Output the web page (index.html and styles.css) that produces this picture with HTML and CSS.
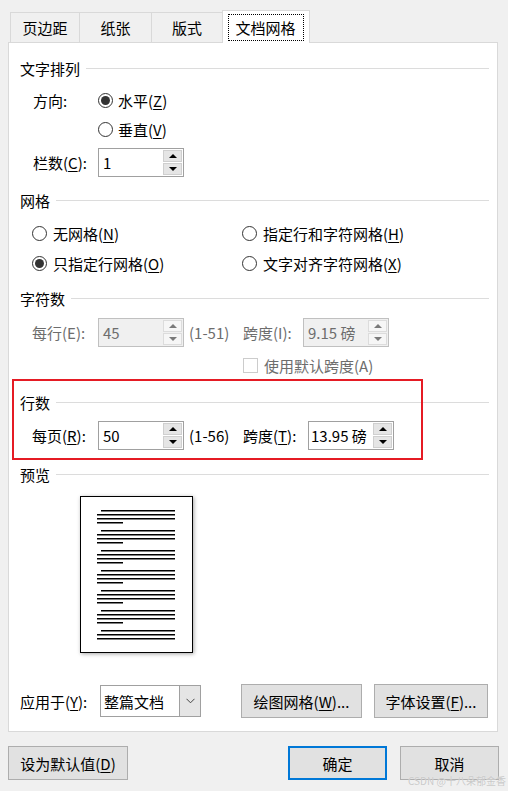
FILE: index.html
```html
<!DOCTYPE html>
<html lang="zh-CN">
<head>
<meta charset="utf-8">
<title>页面设置</title>
<link rel="stylesheet" href="styles.css">
</head>
<body>
<div class="dialog">
  <div class="tabs">
    <div class="tab t1">页边距</div>
    <div class="tab t2">纸张</div>
    <div class="tab t3">版式</div>
    <div class="tab active"><span class="focus">文档网格</span></div>
  </div>

  <div class="panel">
    <div class="title">文字排列</div>

    <div class="row dir1">
      <span class="lbl lbl-dir">方向:</span>
      <span class="radio checked"></span><span class="rtext">水平(<u>Z</u>)</span>
    </div>
    <div class="row dir2">
      <span class="lbl lbl-dir"></span>
      <span class="radio"></span><span class="rtext">垂直(<u>V</u>)</span>
    </div>
    <div class="row cols">
      <span class="lbl lbl-cols">栏数(<u>C</u>):</span>
      <div class="spin w85">
        <div class="val">1</div>
        <div class="btns"><div class="b"><i class="up"></i></div><div class="b"><i class="dn"></i></div></div>
      </div>
    </div>

    <div class="title t-grid">网格</div>
    <div class="row grid1">
      <div class="gitem"><span class="radio"></span><span class="rtext2">无网格(<u>N</u>)</span></div>
      <div class="gitem2"><span class="radio"></span><span class="rtext2">指定行和字符网格(<u>H</u>)</span></div>
    </div>
    <div class="row grid2">
      <div class="gitem"><span class="radio checked"></span><span class="rtext2">只指定行网格(<u>O</u>)</span></div>
      <div class="gitem2"><span class="radio"></span><span class="rtext2">文字对齐字符网格(<u>X</u>)</span></div>
    </div>

    <div class="title t-chars">字符数</div>
    <div class="row chars disabled">
      <span class="lbl lbl-per">每行(E):</span>
      <div class="spin w85 off">
        <div class="val">45</div>
        <div class="btns"><div class="b"><i class="up"></i></div><div class="b"><i class="dn"></i></div></div>
      </div>
      <span class="range">(1-51)</span>
      <span class="lbl lbl-pitch1">跨度(I):</span>
      <div class="spin w86 off">
        <div class="val">9.15 磅</div>
        <div class="btns"><div class="b"><i class="up"></i></div><div class="b"><i class="dn"></i></div></div>
      </div>
    </div>
    <div class="row check disabled">
      <span class="cbox"></span><span class="rtext2">使用默认跨度(A)</span>
    </div>

    <div class="title t-lines">行数</div>
    <div class="row lines">
      <span class="lbl lbl-per">每页(<u>R</u>):</span>
      <div class="spin w85">
        <div class="val">50</div>
        <div class="btns"><div class="b"><i class="up"></i></div><div class="b"><i class="dn"></i></div></div>
      </div>
      <span class="range">(1-56)</span>
      <span class="lbl lbl-pitch2">跨度(<u>T</u>):</span>
      <div class="spin w85 tight">
        <div class="val">13.95 磅</div>
        <div class="btns"><div class="b"><i class="up"></i></div><div class="b"><i class="dn"></i></div></div>
      </div>
    </div>

    <div class="title t-prev">预览</div>
    <div class="page">
      <svg width="111" height="155" viewBox="0 0 111 155">
        <defs>
          <g id="grp">
            <rect x="20" y="13" width="74" height="1.5" fill="#000"/>
            <rect x="16" y="17" width="78" height="1.5" fill="#000"/>
            <rect x="16" y="21" width="78" height="1.5" fill="#000"/>
            <rect x="16" y="25" width="26" height="1.5" fill="#000"/>
          </g>
        </defs>
        <use href="#grp"/>
        <use href="#grp" y="20"/>
        <use href="#grp" y="40"/>
        <use href="#grp" y="60"/>
        <use href="#grp" y="80"/>
        <use href="#grp" y="100"/>
        <rect x="20" y="133" width="74" height="1.5" fill="#000"/>
        <rect x="16" y="137" width="78" height="1.5" fill="#000"/>
        <rect x="16" y="141" width="78" height="1.5" fill="#000"/>
      </svg>
    </div>

    <div class="row apply">
      <span class="lbl lbl-apply">应用于(<u>Y</u>):</span>
      <div class="combo">
        <div class="cval">整篇文档</div>
        <div class="cbtn">
          <svg width="9" height="6" viewBox="0 0 9 6"><polyline points="0.5,0.8 4.5,4.8 8.5,0.8" fill="none" stroke="#444" stroke-width="1"/></svg>
        </div>
      </div>
      <button class="btn b-draw">绘图网格(<u>W</u>)...</button>
      <button class="btn b-font">字体设置(<u>F</u>)...</button>
    </div>

    <div class="highlight"></div>
  </div>

  <div class="footer">
    <button class="btn f-default">设为默认值(<u>D</u>)</button>
    <button class="btn f-ok">确定</button>
    <button class="btn f-cancel">取消</button>
  </div>

  <div class="watermark">CSDN @十八朵郁金香</div>
</div>
</body>
</html>
```

FILE: styles.css
```css
* { box-sizing: border-box; }

html, body {
  margin: 0;
  padding: 0;
}

body {
  width: 508px;
  height: 791px;
  overflow: hidden;
  background: #f0f0f0;
  font-family: "Noto Sans CJK SC", "Noto Sans", sans-serif;
  font-size: 15px;
  color: #000;
}

u {
  text-decoration: underline;
  text-underline-offset: 2px;
  text-decoration-thickness: 1px;
}

.dialog {
  position: relative;
  height: 791px;
  padding-top: 10px;
}

/* Tabs */
.tabs {
  display: flex;
  align-items: flex-start;
  height: 32px;
  margin-left: 10px;
}

.tab {
  height: 30px;
  margin-top: 2px;
  border-top: 1px solid #d9d9d9;
  border-left: 1px solid #d9d9d9;
  display: flex;
  align-items: center;
  justify-content: center;
  line-height: 1;
}

.t1 { width: 69px; }
.t2 { width: 72px; }
.t3 { width: 71px; }

.tab.active {
  width: 88px;
  height: 33px;
  margin-top: 0;
  background: #fff;
  border-right: 1px solid #d9d9d9;
  position: relative;
  z-index: 2;
}

.focus {
  display: flex;
  align-items: center;
  justify-content: center;
  width: 76px;
  height: 27px;
  border: 1px dotted #000;
  margin-left: -1px;
}

/* Panel */
.panel {
  position: relative;
  width: 490px;
  height: 690px;
  margin-left: 8px;
  background: #fff;
  border: 1px solid #d9d9d9;
  padding-top: 12px;
}

.title {
  display: flex;
  align-items: center;
  height: 26px;
  margin-left: 11px;
  margin-right: 8px;
  line-height: 1;
}

.title::after {
  content: "";
  flex: 1;
  height: 1px;
  background: #dcdcdc;
  margin-left: 6px;
}

.t-grid { margin-top: 10px; }
.t-chars { margin-top: 9px; }
.t-lines { margin-top: 11px; }
.t-prev { margin-top: 11px; }

.row {
  display: flex;
  align-items: center;
  line-height: 1;
}

.dir1 { height: 26px; margin-top: 6px; padding-left: 24px; }
.dir2 { height: 26px; margin-top: 3px; padding-left: 24px; }
.cols { height: 29px; margin-top: 6px; padding-left: 24px; }
.grid1 { height: 26px; margin-top: 7px; padding-left: 23px; }
.grid2 { height: 26px; margin-top: 4px; padding-left: 23px; }
.chars { height: 29px; margin-top: 7px; padding-left: 23px; }
.check { height: 26px; margin-top: 5px; padding-left: 234px; }
.lines { height: 29px; margin-top: 6px; padding-left: 23px; }
.apply { height: 32px; margin-top: 32px; padding-left: 11px; }

.lbl { display: inline-block; flex: none; }
.lbl-dir { width: 65px; }
.lbl-cols { width: 65px; }
.lbl-per { width: 66px; }
.lbl-pitch1 { width: 60px; }
.lbl-pitch2 { width: 65px; }
.lbl-apply { width: 80px; }

.range {
  width: 54px;
  margin-left: 5px;
  flex: none;
}

.disabled { color: #6d6d6d; }

/* Radio */
.radio {
  position: relative;
  flex: none;
  width: 15px;
  height: 15px;
  border: 1px solid #333;
  border-radius: 50%;
  background: #fff;
}

.radio.checked::after {
  content: "";
  position: absolute;
  left: 2px;
  top: 2px;
  width: 9px;
  height: 9px;
  border-radius: 50%;
  background: #333;
}

.rtext { margin-left: 5px; }
.rtext2 { margin-left: 6px; }

.gitem {
  display: flex;
  align-items: center;
  width: 210px;
}

.gitem2 {
  display: flex;
  align-items: center;
}

.cbox {
  flex: none;
  width: 15px;
  height: 15px;
  border: 1px solid #cccccc;
  background: #fff;
}

/* Spin box */
.spin {
  display: flex;
  height: 29px;
  border: 1px solid #a0a0a0;
  background: #fff;
  flex: none;
}

.w85 { width: 86px; }
.w86 { width: 86px; }

.spin .val {
  flex: 1;
  display: flex;
  align-items: center;
  padding-left: 4px;
  white-space: nowrap;
}

.spin.tight .val { padding-left: 2px; }

.btns {
  width: 20px;
  display: flex;
  flex-direction: column;
  gap: 1px;
  padding: 1px 1px 1px 0;
}

.b {
  flex: 1;
  display: flex;
  align-items: center;
  justify-content: center;
  background: #e5e5e5;
  border: 1px solid #cfcfcf;
}

.up, .dn {
  display: block;
  width: 0;
  height: 0;
  border-left: 4px solid transparent;
  border-right: 4px solid transparent;
}

.up { border-bottom: 4px solid #000; }
.dn { border-top: 4px solid #000; }

.spin.off {
  border-color: #c0c0c0;
  background: #f0f0f0;
}

.spin.off .b {
  background: #f6f6f6;
  border-color: #dcdcdc;
}

.spin.off .up { border-bottom-color: #7a7a7a; }
.spin.off .dn { border-top-color: #7a7a7a; }

/* Preview */
.page {
  width: 113px;
  height: 157px;
  margin-top: 9px;
  margin-left: 71px;
  border: 1px solid #000;
  background: #fff;
  box-shadow: 1px 1px 4px rgba(0, 0, 0, 0.35);
}

.page svg { display: block; }

/* Combo */
.combo {
  display: flex;
  width: 101px;
  height: 32px;
  border: 1px solid #a0a0a0;
  background: #fff;
  flex: none;
}

.cval {
  flex: 1;
  display: flex;
  align-items: center;
  padding-left: 3px;
}

.cbtn {
  width: 21px;
  display: flex;
  align-items: center;
  justify-content: center;
  background: #e5e5e5;
  border-left: 1px solid #a0a0a0;
}

/* Buttons */
.btn {
  font-family: inherit;
  font-size: 15px;
  color: #000;
  background: #e1e1e1;
  border: 1px solid #adadad;
  padding: 0;
  margin: 0;
  line-height: 1;
  display: flex;
  align-items: center;
  justify-content: center;
  flex: none;
}

.b-draw { width: 121px; height: 34px; margin-left: 40px; }
.b-font { width: 114px; height: 34px; margin-left: 12px; }

.footer {
  display: flex;
  margin-top: 14px;
  padding-left: 8px;
  padding-right: 9px;
}

.f-default { width: 120px; height: 34px; }
.f-ok {
  width: 99px;
  height: 34px;
  margin-left: auto;
  border: 2px solid #0078d7;
}
.f-cancel { width: 99px; height: 34px; margin-left: 13px; }

/* Overlays */
.highlight {
  position: absolute;
  left: 3px;
  top: 336px;
  width: 411px;
  height: 81px;
  border: 2px solid #e51b24;
  pointer-events: none;
}

.watermark {
  position: absolute;
  left: 408px;
  top: 775px;
  font-size: 10px;
  line-height: 11px;
  color: #c9c9c9;
  white-space: nowrap;
  text-shadow: 0 0 1px rgba(255, 255, 255, 0.6);
}
```
